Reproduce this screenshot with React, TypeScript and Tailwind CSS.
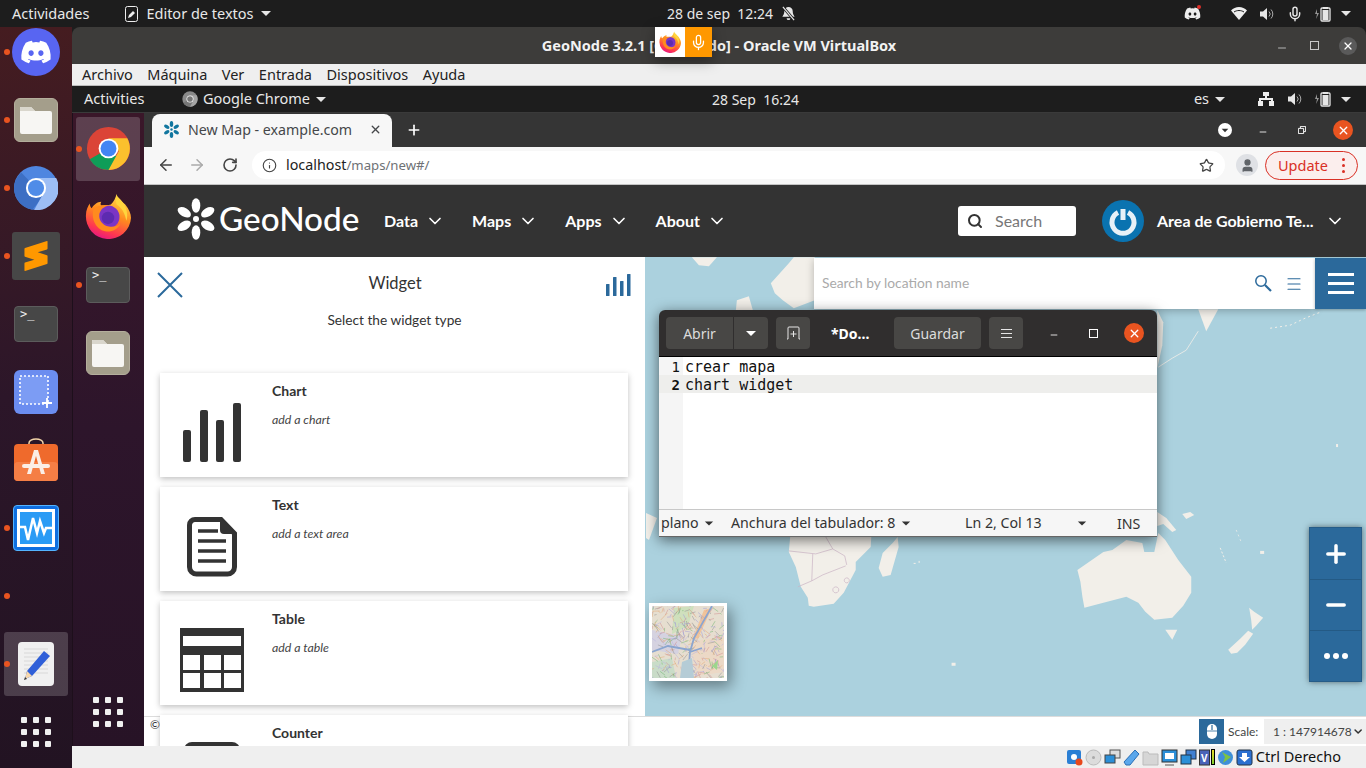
import { ArrowLeft, ArrowRight, ChevronDown, Info, Menu, Mic, Minus, Plus, RotateCw, Search, Star, User, X } from 'lucide-react';
import { FaDiscord } from 'react-icons/fa';
import { SiSublimetext } from 'react-icons/si';
import type { ReactNode } from 'react';

const ui = "font-['Noto_Sans','Liberation_Sans',sans-serif]";

function Caret({ className = 'text-[#e6e6e6]' }: { className?: string }) {
  return (
    <svg width="12" height="7" viewBox="0 0 12 7" className={className}>
      <path d="M1 1h10L6 6z" fill="currentColor" />
    </svg>
  );
}

function ChromeLogo({ size, grey = false }: { size: number; grey?: boolean }) {
  return (
    <svg width={size} height={size} viewBox="0 0 48 48">
      <circle cx="24" cy="24" r="23" fill={grey ? '#8a8a8a' : '#db4437'} />
      <path d="M24 24 4 35.5A23 23 0 0 0 24 47l11.5-11.5z" fill={grey ? '#777' : '#0f9d58'} />
      <path d="M24 13h20a23 23 0 0 1-20 34l11-20z" fill={grey ? '#a5a5a5' : '#fbc02d'} />
      <circle cx="24" cy="24" r="10.5" fill="#fff" />
      <circle cx="24" cy="24" r="8.5" fill={grey ? '#777' : '#4285f4'} />
    </svg>
  );
}

function ChromiumLogo() {
  return (
    <svg width="44" height="44" viewBox="0 0 48 48">
      <circle cx="24" cy="24" r="24" fill="#4f86e0" />
      <path d="M24 24 8 7A24 24 0 0 0 0 24a24 24 0 0 0 20 23.7L32 33z" fill="#3d6fc4" />
      <path d="M24 13h22a24 24 0 0 1-24 35l11-20z" fill="#9dbef5" />
      <circle cx="24" cy="24" r="11" fill="#fff" />
      <circle cx="24" cy="24" r="8.8" fill="#4f8ce8" />
    </svg>
  );
}

function FirefoxLogo({ size }: { size: number }) {
  return (
    <svg width={size} height={size} viewBox="0 0 48 48">
      <defs>
        <linearGradient id="ffa" x1="0.7" y1="0" x2="0.3" y2="1">
          <stop offset="0" stopColor="#ffe04a" />
          <stop offset="0.45" stopColor="#ff8a1f" />
          <stop offset="0.8" stopColor="#ff3750" />
          <stop offset="1" stopColor="#e31587" />
        </linearGradient>
      </defs>
      <path d="M33 1c1 5 5 7 9 11 4 5 6 10 6 14a23.500 23.500 0 1 1-47-3c0-5 2-9 4-12 0 3 1 4 2 5 2-4 6-7 10-7-1 2-1 3 0 4 4 0 7 0 10-1 3-3 5-7 6-11z" fill="url(#ffa)" />
      <circle cx="24" cy="25" r="12" fill="#7b35c4" />
      <circle cx="24" cy="26" r="6.500" fill="#5d2bb0" />
      <path d="M9 17c4-4 10-5 16-4-5 1-9 4-10 9-1 6 3 12 10 13 5 1 9-1 12-3-3 6-9 9-16 8C11 38 6 26 9 17z" fill="#ff8b1e" />
      <path d="M33 3c6 5 11 11 11 20 0 2 0 4-1 6-1-7-4-13-10-17-1-3-1-6 0-9z" fill="#ffd53d" />
    </svg>
  );
}

function TerminalIcon() {
  return (
    <div className="w-[44px] h-[36px] rounded-[4px] bg-[#474747] border border-[#5c5c5c] relative">
      <span className="absolute left-[5px] top-[-1px] text-[#eee] text-[12px] leading-[16px] font-['DejaVu_Sans_Mono',monospace]">&gt;_</span>
    </div>
  );
}

function FilesIcon() {
  return (
    <div className="w-[44px] h-[44px] rounded-[6px] bg-[#a49e8b] border border-[#b4ae9c] flex items-center justify-center">
      <svg width="34" height="30" viewBox="0 0 34 30">
        <path d="M2 2h10l4 4h15a2 2 0 0 1 2 2v19a2 2 0 0 1-2 2H3a2 2 0 0 1-2-2V3a1 1 0 0 1 1-1z" fill="#f7f6f3" />
        <path d="M1 3a1 1 0 0 1 1-1h10l4 4H1z" fill="#d9d6cc" />
      </svg>
    </div>
  );
}

function ScreenshotIcon() {
  return (
    <div className="w-[44px] h-[44px] rounded-[6px] bg-[#6b8df0] flex items-center justify-center">
      <svg width="36" height="36" viewBox="0 0 36 36">
        <rect x="2" y="2" width="28" height="28" fill="#7c9cf4" stroke="#fff" strokeWidth="1.600" strokeDasharray="2 2" />
        <path d="M29 24v10M24 29h10" stroke="#fff" strokeWidth="1.800" />
      </svg>
    </div>
  );
}

function SoftwareIcon() {
  return (
    <svg width="44" height="44" viewBox="0 0 44 44">
      <path d="M15 8V5a7 4 0 0 1 14 0v3" fill="none" stroke="#f2d4a8" strokeWidth="1.500" />
      <rect x="0" y="6" width="44" height="37" rx="4" fill="#ef6a2c" />
      <rect x="0" y="24" width="44" height="19" rx="4" fill="#f57e45" />
      <path d="M13 36 20 12h4l7 24h-4l-5-18-5 18z" fill="#fbeee6" />
      <rect x="8" y="26" width="28" height="4" rx="2" fill="#fbeee6" />
    </svg>
  );
}

function MonitorIcon() {
  return (
    <div className="w-[46px] h-[46px] rounded-[4px] bg-[#0f6fe0] border border-[#54b4ff] p-[3px]">
      <div className="w-full h-full bg-[#2a9bf5] border-[3px] border-white">
        <svg width="34" height="34" viewBox="0 0 34 34">
          <path d="M0 15h5l3 13 5-22 4 15 3-12 4 12 2-5 8 0" fill="none" stroke="#fff" strokeWidth="2.500" />
        </svg>
      </div>
    </div>
  );
}

function GeditIcon() {
  return (
    <div className="w-[36px] h-[44px] rounded-[4px] bg-[#f0f0f0] flex items-center justify-center">
      <svg width="32" height="40" viewBox="0 0 32 40">
        <path d="M4 5h24M4 9h24M4 13h24M4 17h24M4 21h24M4 25h24M4 29h24" stroke="#d8d8d8" />
        <path d="M24 7l6 5-18 20-7 3 2-8z" fill="#2f5fd8" />
        <path d="M7 27l5 5-7 3z" fill="#f6d7ac" />
        <path d="M5 33l2 2-3 1z" fill="#333" />
      </svg>
    </div>
  );
}

function AppGrid() {
  return (
    <div className="grid grid-cols-3 gap-[6px] w-[30px]">
      {Array.from({ length: 9 }).map((_, i) => (
        <span key={i} className="w-[6px] h-[6px] rounded-[1px] bg-[#f0f0f0]" />
      ))}
    </div>
  );
}

function DockSlot({ running, active, children }: { running?: boolean; active?: boolean; children?: ReactNode }) {
  return (
    <div className="relative w-[72px] h-[48px] shrink-0 flex items-center justify-center">
      {active && <div className="absolute left-[4px] right-[4px] top-[-8px] bottom-[-8px] rounded-[3px] bg-[#ffffff2e]" />}
      {running && <span className="absolute left-[4px] top-[21px] w-[6px] h-[6px] rounded-full bg-[#e95420]" />}
      <div className="relative">{children}</div>
    </div>
  );
}

function Card({ title, sub, icon }: { title: string; sub: string; icon: ReactNode }) {
  return (
    <div className="w-[468px] h-[104px] shrink-0 bg-white shadow-[0_2px_6px_rgba(0,0,0,0.25)] flex">
      <div className="w-[104px] h-[104px] flex items-center justify-center pt-[14px]">{icon}</div>
      <div className="pl-[8px] pt-[9px]">
        <div className="text-[14px] leading-[18px] font-bold text-[#333]">{title}</div>
        <div className="mt-[12px] text-[12.300px] leading-[16px] italic text-[#444]">{sub}</div>
      </div>
    </div>
  );
}

function GeoLogo({ size, color }: { size: number; color: string }) {
  return (
    <svg width={size} height={size} viewBox="-21 -21 42 42">
      {[0, 60, 120, 180, 240, 300].map(a => (
        <ellipse key={a} cx="0" cy="-13.500" rx="4.300" ry="7.300" fill={color} transform={`rotate(${a})`} />
      ))}
      <circle r="3" fill={color} />
    </svg>
  );
}

function NavItem({ label }: { label: string }) {
  return (
    <div className="flex items-center gap-[7px] text-white text-[16px] font-bold">
      <span>{label}</span>
      <ChevronDown size={20} strokeWidth={2} />
    </div>
  );
}

function Volume({ size = 16 }: { size?: number }) {
  return (
    <svg width={size} height={size} viewBox="0 0 16 16" className="text-[#e6e6e6]">
      <path d="M1 5.500h3L8 2v12l-4-3.500H1z" fill="currentColor" />
      <path d="M10 5.500a3.500 3.500 0 0 1 0 5M12 3.500a6.500 6.500 0 0 1 0 9" fill="none" stroke="currentColor" strokeWidth="1" opacity="0.7" />
    </svg>
  );
}

function Battery() {
  return (
    <svg width="16" height="16" viewBox="0 0 16 16" className="text-[#e6e6e6]">
      <path d="M2 3 0 8h2l-1 5 3-6H2z" fill="currentColor" opacity="0.6" />
      <rect x="6" y="2" width="9" height="13" rx="1" fill="none" stroke="currentColor" strokeWidth="1.300" />
      <rect x="8" y="1" width="5" height="2" fill="currentColor" />
      <rect x="7.500" y="4" width="6" height="10" fill="currentColor" />
    </svg>
  );
}

// manchas de tierra del mapa, en coordenadas de pagina
function MapDrawing() {
  return (
    <svg className="absolute inset-0 w-full h-full" viewBox="644 257 722 459">
      <g fill="#f2efe9">
        <path d="M790 530 788 552 795 567 800 587 807 598 808 606 813 607 833 604 843 593 855 570 855 562 870 547 871 530z" />
        <path d="M897 537 898 547 890 575 882 577 878 568 882 553 892 543z" />
        <path d="M1077 570 1090 561 1103 552 1112 550 1126 540 1142 543 1144 552 1154 552 1158 533 1165 540 1178 560 1191 577 1191 593 1183 606 1172 618 1154 620 1145 612 1138 603 1126 597 1103 603 1084 608 1082 597 1080 582z" />
        <path d="M1165 630 1177 630 1172 640z" />
        <path d="M1249 608 1254 612 1263 618 1256 626 1252 630 1251 620z" />
        <path d="M1248 631 1240 639 1228 650 1231 654 1237 653 1245 645 1253 634z" />
        <path d="M770 283 788 263 793 257 814 257 814 300 793 308 782 300 774 293z" />
        <path d="M691 257 716 257 708 266 698 265z" />
        <path d="M736 300 748 296 752 310 735 310z" />
        <path d="M1198 309 1218 309 1206 331z" />
        <path d="M1157 310 1163 322 1162 345 1157 368z" />
        <path d="M645 513 656 518 648 540 645 538z" />
        <path d="M1157 512 1166 518 1176 530 1172 532 1163 524 1157 526z" />
        <path d="M1182 514 1190 512 1194 515 1186 519z" />
      </g>
      <g fill="none" stroke="#f2efe9">
        <path d="M1158 367 1172 358 1186 350 1198 331" strokeWidth="0.800" />
        <path d="M1270 328 1290 325 1305 318 1320 312" strokeWidth="1" strokeDasharray="2 3" />
        <path d="M1220 548 1226 563" strokeWidth="1" strokeDasharray="2 2" />
        <path d="M1236 530 1241 542" strokeWidth="0.700" strokeDasharray="2 3" />
      </g>
      <g fill="none" stroke="#c9b3c4" strokeWidth="0.700">
        <path d="M788 551 815 554 832 549 844 556 846 565M812 554 811 581 822 575 845 566M832 549 825 537M797 587 811 581M846 578a2.500 2.500 0 1 0 .1 0M835 587a3 3 0 1 0 .1 0" />
      </g>
      <g fill="#f2efe9">
        <rect x="913" y="563" width="2" height="1" />
        <rect x="918" y="561" width="1" height="2" />
        <rect x="951" y="663" width="4" height="3" />
        <rect x="1260" y="551" width="4" height="3" />
        <rect x="1336" y="444" width="2" height="3" />
      </g>
    </svg>
  );
}

function hash(n: number) {
  const v = Math.sin(n * 12.9898) * 43758.5453;
  return v - Math.floor(v);
}

// trazos del mapa pequeño
const thumbLines = Array.from({ length: 300 }).map((_, i) => {
  const colors = ['#d08f8f', '#9f98d4', '#6fb56f', '#e3a874', '#8f8f8f', '#b9b3e0'];
  return {
    x: hash(i + 1) * 72,
    y: hash(i + 501) * 72,
    dx: hash(i + 1001) * 14 - 7,
    dy: hash(i + 1501) * 14 - 7,
    c: colors[Math.floor(hash(i + 2001) * 6)],
  };
});

function ThumbMap() {
  return (
    <svg width="72" height="72" viewBox="0 0 72 72" className="block blur-[0.4px]">
      <rect width="72" height="72" fill="#e6ded0" />
      <path d="M22 2 42 0 36 20 20 28z" fill="#cfe0bd" />
      <path d="M0 56 20 52 24 72 0 72z" fill="#c9dcc8" />
      <path d="M0 24 30 30 26 48 0 44z" fill="#d5d2e0" />
      <path d="M52 4 60 2 46 32 40 34z" fill="#f0c39a" />
      <path d="M38 36 72 30 72 66 44 70z" fill="#ecd9c6" />
      {thumbLines.map((l, i) => (
        <path key={i} d={`M${l.x.toFixed(1)} ${l.y.toFixed(1)}l${l.dx.toFixed(1)} ${l.dy.toFixed(1)}`} stroke={l.c} strokeWidth="0.500" fill="none" />
      ))}
      <path d="M60 0 42 32 38 46 36 72M38 44 16 40 0 46M38 46 50 42" stroke="#8ba5cf" strokeWidth="1.800" fill="none" />
      <path d="M30 56 40 52 42 72 28 72z" fill="#b5ccd6" />
      <path d="M60 60 66 54 65 64z" fill="#9cd68c" />
    </svg>
  );
}

function VBoxIcon({ children }: { children: ReactNode }) {
  return (
    <svg width="17" height="17" viewBox="0 0 17 17">
      {children}
    </svg>
  );
}

export default function App() {
  return (
    <div className={`relative w-[1366px] h-[768px] overflow-hidden flex flex-col bg-[#1d1d1d] ${ui}`}>
      {/* barra del host */}
      <div className="h-[27px] shrink-0 bg-[#1d1d1d] text-[#e8e8e8] text-[14.500px] flex items-center relative">
        <span className="ml-[12px]">Actividades</span>
        <div className="ml-[36px] flex items-center">
          <svg width="13" height="16" viewBox="0 0 13 16">
            <rect x="0.500" y="0.500" width="12" height="15" rx="2" fill="none" stroke="#eee" />
            <path d="M3 12l1-3 4-4 2 2-4 4z" fill="#eee" />
          </svg>
          <span className="ml-[8px]">Editor de textos</span>
          <span className="ml-[6px]"><Caret /></span>
        </div>
        <div className="absolute left-[667px] top-0 h-full flex items-center whitespace-pre text-[14px]">28 de sep  12:24</div>
        <svg className="absolute left-[781px] top-[6px]" width="15" height="15" viewBox="0 0 16 16">
          <path d="M8 1a4.500 4.500 0 0 0-4.500 4.500c0 4-2 5-2 6h13c0-1-2-2-2-6A4.500 4.500 0 0 0 8 1zM6 13h4a2 2 0 0 1-4 0z" fill="#e6e6e6" />
          <path d="M2 1l12 14" stroke="#1d1d1d" strokeWidth="3" />
          <path d="M2 1l12 14" stroke="#e6e6e6" strokeWidth="1.300" />
        </svg>
        <div className="ml-auto flex items-center">
          <div className="relative mr-[30px]">
            <FaDiscord size={17} className="text-[#eee]" />
            <span className="absolute right-0 top-0 w-[4px] h-[4px] rounded-full bg-[#e0302a]" />
          </div>
          <svg width="16" height="13" viewBox="0 0 16 13" className="mr-[12px]">
            <path d="M0 3.500C2 1.500 5 0 8 0s6 1.500 8 3.500L8 13z" fill="#eee" />
            <path d="M3 5c1.500-1 3.200-1.500 5-1.500S11.500 4 13 5" stroke="#1d1d1d" fill="none" />
          </svg>
          <span className="mr-[12px]"><Volume /></span>
          <Mic size={16} className="text-[#e6e6e6] mr-[12px]" strokeWidth={2.200} />
          <span className="mr-[9px]"><Battery /></span>
          <span className="mr-[14px]"><Caret /></span>
        </div>
      </div>

      <div className="flex-1 flex min-h-0">
        {/* dock del host */}
        <div className="w-[72px] shrink-0 flex flex-col items-center gap-[20px] pt-px bg-gradient-to-b from-[#451c20] via-[#2c1629] to-[#221322]">
          <DockSlot running>
            <div className="w-[48px] h-[48px] rounded-full bg-[#5865f2] flex items-center justify-center">
              <FaDiscord size={32} className="text-white" />
            </div>
          </DockSlot>
          <DockSlot running><FilesIcon /></DockSlot>
          <DockSlot running><ChromiumLogo /></DockSlot>
          <DockSlot running>
            <div className="w-[48px] h-[48px] rounded-[3px] bg-[#474747] flex items-center justify-center">
              <SiSublimetext size={30} className="text-[#ff9800]" />
            </div>
          </DockSlot>
          <DockSlot><TerminalIcon /></DockSlot>
          <DockSlot><ScreenshotIcon /></DockSlot>
          <DockSlot><SoftwareIcon /></DockSlot>
          <DockSlot running><MonitorIcon /></DockSlot>
          <DockSlot running />
          <DockSlot running active><GeditIcon /></DockSlot>
          <DockSlot><AppGrid /></DockSlot>
        </div>

        {/* ventana de VirtualBox */}
        <div className="flex-1 min-w-0 flex flex-col">
          <div className="h-[37px] shrink-0 rounded-t-[8px] bg-[#3d3c3a] relative flex items-center justify-center">
            <span className="text-[#f2f2f2] text-[14.500px] font-bold">GeoNode 3.2.1 [Corriendo] - Oracle VM VirtualBox</span>
            <div className="absolute right-[9px] top-0 h-full flex items-center text-[#b5b5b5]">
              <Minus size={12} className="mr-[22px] mt-[4px]" />
              <span className="w-[9px] h-[9px] border border-[#c8c8c8] mr-[20px]" />
              <span className="w-[18px] h-[18px] rounded-full bg-[#5a5a5a] flex items-center justify-center text-white"><X size={12} strokeWidth={2.500} /></span>
            </div>
          </div>
          <div className="h-[22px] shrink-0 bg-[#efefef] border-b border-[#bcbcbc] flex items-center gap-[14.500px] pl-[10px] text-[14.500px] text-[#222]">
            <span>Archivo</span>
            <span>Máquina</span>
            <span>Ver</span>
            <span>Entrada</span>
            <span>Dispositivos</span>
            <span>Ayuda</span>
          </div>

          {/* barra del invitado */}
          <div className="h-[27px] shrink-0 bg-[#1d1d1d] border-b border-[#3a3a3a] text-[#e8e8e8] text-[14.500px] flex items-center relative">
            <span className="ml-[12px] w-[62px]">Activities</span>
            <div className="ml-[36px] flex items-center">
              <ChromeLogo size={16} grey />
              <span className="ml-[5px]">Google Chrome</span>
              <span className="ml-[5px]"><Caret /></span>
            </div>
            <div className="absolute left-[640px] top-0 h-full flex items-center whitespace-pre text-[14px]">28 Sep  16:24</div>
            <div className="ml-auto flex items-center">
              <span className="mr-[5px]">es</span>
              <span className="mr-[32px]"><Caret /></span>
              <svg width="16" height="14" viewBox="0 0 16 14" className="mr-[13px]">
                <path d="M5 0h6v4H9v2h6v3h1v5h-5V9h2V8H3v1h2v5H0V9h1V6h6V4H5z" fill="#eee" />
              </svg>
              <span className="mr-[12px]"><Volume /></span>
              <span className="mr-[9px]"><Battery /></span>
              <span className="mr-[14px]"><Caret /></span>
            </div>
          </div>

          <div className="flex-1 min-h-0 flex">
            {/* dock del invitado */}
            <div className="w-[72px] shrink-0 flex flex-col items-center gap-[20px] pt-[12px] pb-[10px] shadow-[inset_1px_0_0_#1d0f1b] bg-gradient-to-b from-[#3a1729] via-[#2d152b] to-[#271326]">
              <DockSlot running active><div className="-mt-[2px]"><ChromeLogo size={45} /></div></DockSlot>
              <DockSlot><div className="-mt-[3px]"><FirefoxLogo size={46} /></div></DockSlot>
              <DockSlot running><TerminalIcon /></DockSlot>
              <DockSlot><FilesIcon /></DockSlot>
              <div className="mt-auto"><DockSlot><AppGrid /></DockSlot></div>
            </div>

            {/* chrome */}
            <div className="flex-1 min-w-0 flex flex-col">
              <div className="h-[34px] shrink-0 bg-[#353535] flex items-end pl-[8px] text-white">
                <div className="w-[240px] h-[33px] rounded-t-[8px] bg-[#f7f7f7] flex items-center pl-[11px] pr-[10px] pb-[2px]">
                  <GeoLogo size={17} color="#11769f" />
                  <span className="ml-[8px] text-[14.200px] text-[#45474a]">New Map - example.com</span>
                  <X size={13} strokeWidth={2.500} className="ml-auto text-[#45474a]" />
                </div>
                <Plus size={16} strokeWidth={2.500} className="ml-[14px] mb-[9px]" />
                <div className="ml-auto flex items-center mb-[7px] mr-[13px]">
                  <span className="w-[14px] h-[14px] rounded-full bg-white flex items-center justify-center mr-[26px]">
                    <Caret className="text-[#333] w-[8px] h-[5px]" />
                  </span>
                  <Minus size={10} strokeWidth={2} className="mr-[30px] mt-[3px]" />
                  <svg width="8" height="8" viewBox="0 0 10 10" className="mr-[27px]">
                    <path d="M3 2.500V.5h6.500V7H7.500M.5 3H7v6.500H.5z" fill="none" stroke="#fff" strokeWidth="1.200" />
                  </svg>
                  <span className="w-[20px] h-[20px] rounded-full bg-[#e95420] flex items-center justify-center"><X size={13} strokeWidth={2.500} /></span>
                </div>
              </div>
              <div className="h-[38px] shrink-0 bg-[#f7f7f7] border-b border-[#c4c4c4] flex items-center pb-[1px]">
                <ArrowLeft size={18} strokeWidth={2} className="ml-[13px] text-[#444]" />
                <ArrowRight size={18} strokeWidth={2} className="ml-[13px] text-[#aaa]" />
                <RotateCw size={16} strokeWidth={2.400} className="ml-[16px] text-[#444]" />
                <div className="ml-[14px] w-[973px] h-[28px] rounded-full bg-white flex items-center">
                  <Info size={15} strokeWidth={1.800} className="ml-[10px] text-[#444]" />
                  <span className="ml-[9px] text-[14.300px] text-[#222]">localhost<span className="text-[13.200px] text-[#6e7175]">/maps/new#/</span></span>
                  <Star size={15} strokeWidth={2} className="ml-auto mr-[11px] text-[#444]" />
                </div>
                <span className="ml-[11px] w-[22px] h-[22px] rounded-full bg-[#dfe1e5] flex items-center justify-center overflow-hidden">
                  <User size={15} className="text-[#5f6368] fill-[#5f6368]" />
                </span>
                <div className="ml-[7px] w-[93px] h-[29px] rounded-full border border-[#d93025] bg-[#fbeeed] flex items-center pl-[12px] pt-[1px] text-[#d93025] text-[14.500px]">
                  Update
                  <span className="ml-auto mr-[12px] flex flex-col gap-[3px]">
                    <i className="w-[3px] h-[3px] rounded-full bg-[#d93025]" />
                    <i className="w-[3px] h-[3px] rounded-full bg-[#d93025]" />
                    <i className="w-[3px] h-[3px] rounded-full bg-[#d93025]" />
                  </span>
                </div>
              </div>

              {/* cabecera de GeoNode */}
              <div className="h-[72px] shrink-0 bg-[#333] flex items-center font-['Lato',sans-serif]">
                <div className="ml-[31px] -mt-[4px]"><GeoLogo size={42} color="#fff" /></div>
                <span className="ml-[2px] -mt-[4px] w-[142px] text-white text-[33.300px] leading-none font-['Lato',sans-serif] font-medium">GeoNode</span>
                <div className="ml-[23px] flex items-center gap-[27px]">
                  <NavItem label="Data" />
                  <NavItem label="Maps" />
                  <NavItem label="Apps" />
                  <NavItem label="About" />
                </div>
                <div className="ml-auto w-[118px] h-[30px] bg-white rounded-[3px] flex items-center pl-[9px] text-[16px] text-[#777]">
                  <Search size={16} strokeWidth={3} className="text-[#333]" />
                  <span className="ml-[12px]">Search</span>
                </div>
                <div className="ml-[26px] w-[42px] h-[42px] rounded-full bg-[#0a73b0] flex items-center justify-center">
                  <svg width="30" height="30" viewBox="0 0 30 30">
                    <path d="M10 6.500a11 11 0 1 0 10 0" fill="none" stroke="#fff" strokeWidth="5" opacity="0.900" />
                    <path d="M15 3v11" stroke="#fff" strokeWidth="5" opacity="0.900" />
                  </svg>
                </div>
                <span className="ml-[13px] w-[165px] text-white text-[16px] font-bold whitespace-nowrap">Area de Gobierno Te...</span>
                <ChevronDown size={20} strokeWidth={2} className="text-white ml-[3px] mr-[21px]" />
              </div>

              {/* contenido de la pagina */}
              <div className="flex-1 min-h-0 flex flex-col overflow-hidden bg-white font-['Lato',sans-serif]">
                <div className="h-[459px] shrink-0 flex">
                  <div className="relative z-10 w-[501px] h-[459px] shrink-0 bg-white">
                    <div className="h-[116px] relative flex flex-col items-center text-[#333]">
                      <div className="flex items-start justify-between w-full pl-[13px] pr-[13px] pt-[15px]">
                        <svg width="26" height="26" viewBox="0 0 26 26">
                          <path d="M1 1l24 24M25 1 1 25" stroke="#2b699b" strokeWidth="2" />
                        </svg>
                        <span className="text-[16.500px] leading-[22px]">Widget</span>
                        <svg width="26" height="26" viewBox="0 0 26 26" className="-ml-[1px]">
                          <rect x="0" y="12" width="3.500" height="12" rx="0.500" fill="#2b699b" />
                          <rect x="7" y="5" width="3.500" height="19" rx="0.500" fill="#2b699b" />
                          <rect x="14" y="9" width="3.500" height="15" rx="0.500" fill="#2b699b" />
                          <rect x="21" y="2" width="3.500" height="22" rx="0.500" fill="#2b699b" />
                        </svg>
                      </div>
                      <span className="mt-[12px] text-[13.700px] leading-[20px]">Select the widget type</span>
                    </div>
                    <div className="flex flex-col gap-[10px] pl-[16px]">
                      <Card
                        title="Chart"
                        sub="add a chart"
                        icon={
                          <svg width="60" height="60" viewBox="0 0 60 60" fill="#333" className="mt-[2px]">
                            <rect x="1" y="27" width="8" height="32" rx="2" />
                            <rect x="18" y="7" width="8" height="52" rx="2" />
                            <rect x="34" y="17" width="8" height="42" rx="2" />
                            <rect x="51" y="0" width="8" height="59" rx="2" />
                          </svg>
                        }
                      />
                      <Card
                        title="Text"
                        sub="add a text area"
                        icon={
                          <svg width="50" height="60" viewBox="0 0 50 60" className="mt-[2px]">
                            <path d="M8 2.500h26l13.500 14V50a7 7 0 0 1-7 7H9.500a7 7 0 0 1-7-7V8A5.500 5.500 0 0 1 8 2.500z" fill="none" stroke="#333" strokeWidth="5" />
                            <path d="M33 1v12a4 4 0 0 0 4 4h12L34 1z" fill="#333" />
                            <path d="M11 14h20M11 24h28M11 34h28M11 44h28" stroke="#333" strokeWidth="3.500" />
                          </svg>
                        }
                      />
                      <Card
                        title="Table"
                        sub="add a table"
                        icon={
                          <svg width="64" height="64" viewBox="0 0 64 64">
                            <rect width="64" height="64" fill="#333" />
                            <rect x="3" y="8" width="58" height="10" fill="#fff" />
                            {[3, 24, 44].map(x =>
                              [27, 45].map(y => <rect key={`${x}-${y}`} x={x} y={y} width="17" height="15" fill="#fff" />)
                            )}
                          </svg>
                        }
                      />
                      <Card
                        title="Counter"
                        sub=""
                        icon={
                          <svg width="60" height="60" viewBox="0 0 60 60" className="-mt-[4px]">
                            <rect x="2" y="0" width="56" height="50" rx="8" fill="#333" />
                          </svg>
                        }
                      />
                    </div>
                  </div>

                  {/* mapa */}
                  <div className="relative flex-1 min-w-0 bg-[#abd1de] overflow-hidden">
                    <MapDrawing />
                    <div className="absolute left-[169px] top-[1px] w-[501px] h-[51px] bg-white shadow-[0_2px_8px_rgba(0,0,0,0.25)] flex items-center pl-[8px] text-[13.800px] text-[#aaa]">
                      Search by location name
                      <svg width="18" height="18" viewBox="0 0 18 18" className="ml-auto mr-[13px] -mt-[1px]">
                        <circle cx="7" cy="7" r="5.200" fill="none" stroke="#2b699b" strokeWidth="1.500" />
                        <path d="M11 11l6 6" stroke="#2b699b" strokeWidth="2.200" />
                      </svg>
                      <Menu size={18} strokeWidth={1.500} className="text-[#2b699b] mr-[12px]" />
                    </div>
                    <div className="absolute right-0 top-[1px] w-[51px] h-[51px] bg-[#2b699b] flex items-center justify-center shadow-[0_1px_3px_rgba(0,0,0,0.3)]">
                      <div className="flex flex-col gap-[6px]">
                        <i className="w-[26px] h-[3px] bg-white" />
                        <i className="w-[26px] h-[3px] bg-white" />
                        <i className="w-[26px] h-[3px] bg-white" />
                      </div>
                    </div>
                    <div className="absolute left-[4px] top-[346px] w-[78px] h-[78px] border-[3px] border-white overflow-hidden shadow-[4px_6px_14px_rgba(0,0,0,0.4)]">
                      <ThumbMap />
                    </div>
                    <div className="absolute left-[664px] top-[270px] w-[53px] flex flex-col bg-[#2b699b] border border-[#255c88] shadow-[0_0_6px_rgba(0,0,0,0.5)] text-white">
                      <div className="h-[51px] flex items-center justify-center"><Plus size={28} strokeWidth={3} /></div>
                      <div className="h-[51px] flex items-center justify-center border-t border-[#245a85]"><Minus size={28} strokeWidth={3} /></div>
                      <div className="h-[51px] flex items-center justify-center gap-[3px] border-t border-[#245a85]">
                        <i className="w-[6px] h-[6px] rounded-full bg-white" />
                        <i className="w-[6px] h-[6px] rounded-full bg-white" />
                        <i className="w-[6px] h-[6px] rounded-full bg-white" />
                      </div>
                    </div>
                  </div>
                </div>

                {/* pie */}
                <div className="h-[30px] shrink-0 border-t border-[#dcdcdc] bg-white flex items-center text-[#333] relative">
                  <span className="ml-[6px] -mt-[14px] text-[12px]">©</span>
                  <div className="ml-auto w-[25px] h-[25px] shrink-0 bg-[#2b699b] flex items-center justify-center">
                    <svg width="10" height="15" viewBox="0 0 10 15">
                      <rect width="10" height="15" rx="5" fill="#fff" />
                      <path d="M5 1v5" stroke="#2b699b" strokeWidth="1.200" />
                      <path d="M0 7h10" stroke="#2b699b" strokeWidth="0.800" />
                    </svg>
                  </div>
                  <span className="ml-[4px] w-[32px] shrink-0 text-[12px] text-[#444]">Scale:</span>
                  <div className="ml-[4px] w-[102px] h-[25px] shrink-0 bg-[#efefef] flex items-center pl-[9px] text-[12px] text-[#444]">
                    <span className="whitespace-pre">1 : 147914678</span>
                    <ChevronDown size={13} strokeWidth={3} className="ml-auto mr-[2px] text-[#333]" />
                  </div>
                </div>
              </div>
            </div>
          </div>

          {/* estado de VirtualBox */}
          <div className="h-[22px] shrink-0 bg-[#efefef] flex items-center justify-end text-[14.500px] text-[#111]">
            <div className="flex items-center gap-[2px] mr-[3px]">
              <VBoxIcon><rect x="1" y="1" width="14" height="14" rx="2" fill="#2b7fd4" /><circle cx="8" cy="8" r="3" fill="#fff" /><circle cx="13" cy="13" r="3.500" fill="#e8481c" /></VBoxIcon>
              <VBoxIcon><circle cx="8.500" cy="8.500" r="7.500" fill="#dcdcdc" stroke="#bbb" /><circle cx="8.500" cy="8.500" r="1.500" fill="#aaa" /></VBoxIcon>
              <VBoxIcon><rect x="6" y="1" width="10" height="8" fill="#ddd" stroke="#555" /><rect x="1" y="6" width="10" height="8" fill="#2b8fd8" stroke="#444" /></VBoxIcon>
              <VBoxIcon><path d="M12 1l4 4-9 11H3l-2-3z" fill="#5aa7ec" stroke="#2b6fb4" /></VBoxIcon>
              <VBoxIcon><path d="M1 3h5l1 2h9v11H1z" fill="#d6d6d6" stroke="#bbb" /></VBoxIcon>
              <VBoxIcon><rect x="1" y="1" width="15" height="12" fill="#2b8fd8" stroke="#333" /><rect x="4" y="4" width="9" height="6" fill="#fff" /><path d="M4 16h9" stroke="#555" /></VBoxIcon>
              <VBoxIcon><rect x="6" y="1" width="10" height="9" fill="#3f7fd0" stroke="#234" /><rect x="1" y="6" width="10" height="9" fill="#2b8fd8" stroke="#234" /></VBoxIcon>
              <svg width="11" height="17" viewBox="0 0 11 17"><rect x="0.500" y="1" width="10" height="15" fill="#4a62b8" stroke="#333" /><text x="2" y="13" fontSize="10" fontWeight="700" fill="#fff">V</text></svg>
              <span className="-ml-[1px] w-[4px] h-[16px] bg-gradient-to-t from-[#7ecf2a] to-[#e8d92a] border border-black" />
              <VBoxIcon><circle cx="8.500" cy="8.500" r="7.500" fill="#3f8fd8" /><path d="M5 3l9 5-8 6 2-6z" fill="#7dc242" /></VBoxIcon>
              <VBoxIcon><rect x="1" y="1" width="15" height="15" rx="2" fill="#2b6fd0" stroke="#234" /><path d="M6 4h5v4h3l-5.500 5L3 8h3z" fill="#fff" /></VBoxIcon>
            </div>
            <span className="mr-[25px]">Ctrl Derecho</span>
          </div>
        </div>
      </div>

      {/* ventana de gedit */}
      <div className="absolute left-[659px] top-[310px] w-[498px] h-[227px] rounded-t-[6px] overflow-hidden flex flex-col shadow-[0_3px_14px_rgba(0,0,0,0.55)] border-b border-[#666]">
        <div className="h-[47px] shrink-0 bg-[#302e2e] border-b border-black flex items-center text-[14px] text-[#dcdcdc]">
          <div className="ml-[7px] h-[32px] w-[102px] flex rounded-[4px] bg-[#484745]">
            <span className="w-[68px] flex items-center justify-center border-r border-[#302e2e]">Abrir</span>
            <span className="flex-1 flex items-center justify-center"><Caret className="text-white" /></span>
          </div>
          <span className="ml-[8px] w-[34px] h-[32px] rounded-[4px] bg-[#484745] flex items-center justify-center">
            <svg width="15" height="14" viewBox="0 0 15 14">
              <path d="M1 13h1V2a1 1 0 0 1 1-1h9a1 1 0 0 1 1 1v11h1M7.500 5v6M4.500 8h6" fill="none" stroke="#e6e6e6" />
            </svg>
          </span>
          <span className="ml-[21px] w-[50px] font-bold text-white text-[14px]">*Do...</span>
          <span className="ml-[13px] w-[87px] h-[32px] rounded-[4px] bg-[#484745] flex items-center justify-center">Guardar</span>
          <span className="ml-[8px] w-[34px] h-[32px] rounded-[4px] bg-[#484745] flex items-center justify-center">
            <span className="flex flex-col gap-[3px]">
              <i className="w-[11px] h-px bg-[#e6e6e6]" />
              <i className="w-[11px] h-px bg-[#e6e6e6]" />
              <i className="w-[11px] h-px bg-[#e6e6e6]" />
            </span>
          </span>
          <Minus size={10} strokeWidth={2} className="ml-[26px] mt-[4px] text-white" />
          <span className="ml-[30px] w-[9px] h-[9px] border border-white" />
          <span className="ml-[26px] w-[20px] h-[20px] rounded-full bg-[#e95420] flex items-center justify-center text-white"><X size={13} strokeWidth={2.500} /></span>
        </div>
        <div className="flex-1 min-h-0 flex flex-col bg-white font-['DejaVu_Sans_Mono',monospace] text-[15px] leading-[18px] text-[#111] relative">
          <div className="absolute left-0 top-0 bottom-0 w-[24px] bg-[#f5f5f5]" />
          <div className="relative flex h-[17px] mt-px">
            <span className="w-[21px] text-right text-[14px]">1</span>
            <span className="ml-[5px]">crear mapa</span>
          </div>
          <div className="relative flex h-[18px] bg-[#eeeeec] leading-[20px]">
            <span className="w-[21px] text-right font-bold text-[14px]">2</span>
            <span className="ml-[5px]">chart widget</span>
          </div>
        </div>
        <div className="h-[27px] shrink-0 bg-[#f6f6f6] border-t border-[#c8c8c8] flex items-center text-[14.200px] text-[#333]">
          <span className="ml-[2px] w-[40px]">plano</span>
          <Caret className="ml-[3px] text-[#333] w-[10px]" />
          <span className="ml-[17px] w-[165px] whitespace-nowrap">Anchura del tabulador: 8</span>
          <Caret className="ml-[5px] text-[#333] w-[10px]" />
          <span className="ml-[54px] w-[77px] whitespace-nowrap">Ln 2, Col 13</span>
          <Caret className="ml-[35px] text-[#333] w-[10px]" />
          <span className="ml-[30px] mt-[1px]">INS</span>
        </div>
      </div>

      {/* aviso de micro */}
      <div className="absolute left-[655px] top-[27px] w-[57px] h-[30px] flex shadow-[0_4px_14px_rgba(0,0,0,0.35)]">
        <div className="w-[30px] bg-white flex items-center justify-center"><FirefoxLogo size={22} /></div>
        <div className="flex-1 bg-[#ff9800] flex items-center justify-center"><Mic size={17} className="text-white" strokeWidth={1.800} /></div>
      </div>
    </div>
  );
}
